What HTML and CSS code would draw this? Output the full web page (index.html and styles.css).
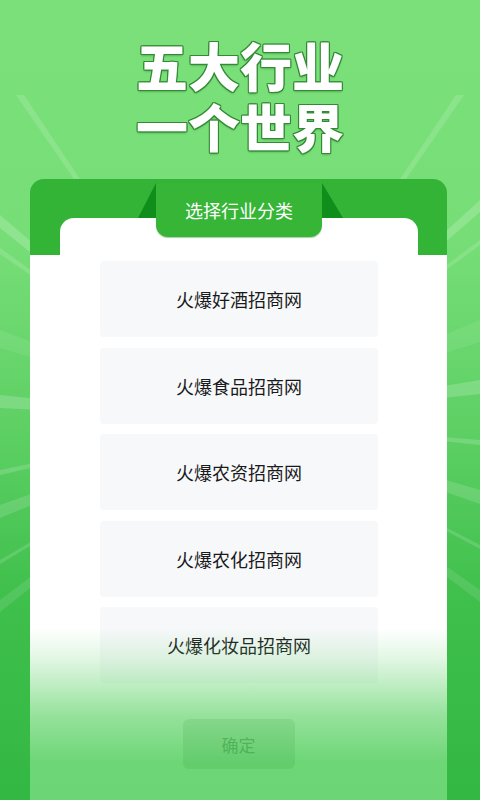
FILE: index.html
```html
<!DOCTYPE html>
<html lang="zh-CN">
<head>
    <meta charset="UTF-8">
    <meta name="viewport" content="width=device-width, initial-scale=1.0">
    <title>选择行业分类</title>
    <link rel="stylesheet" href="styles.css">
</head>
<body>
    <div class="page">
        <svg class="rays" width="480" height="800" viewBox="0 0 480 800">
            <g fill="#ffffff">
                <polygon points="240,420 0,215 0,228" opacity="0.18"/>
                <polygon points="240,420 0,248 0,254" opacity="0.14"/>
                <polygon points="240,420 0,330 0,348" opacity="0.08"/>
                <polygon points="240,420 0,395 0,408" opacity="0.18"/>
                <polygon points="240,420 0,470 0,475" opacity="0.16"/>
                <polygon points="240,420 0,505 0,518" opacity="0.14"/>
                <polygon points="240,420 0,560 0,564" opacity="0.14"/>
                <polygon points="240,420 0,600 0,612" opacity="0.1"/>
                <polygon points="240,420 16,95 24,95" opacity="0.14"/>
                <polygon points="240,420 480,200 480,212" opacity="0.18"/>
                <polygon points="240,420 480,240 480,245" opacity="0.14"/>
                <polygon points="240,420 480,320 480,342" opacity="0.08"/>
                <polygon points="240,420 480,380 480,394" opacity="0.18"/>
                <polygon points="240,420 480,440 480,445" opacity="0.16"/>
                <polygon points="240,420 480,490 480,504" opacity="0.14"/>
                <polygon points="240,420 480,545 480,549" opacity="0.14"/>
                <polygon points="240,420 480,590 480,602" opacity="0.1"/>
                <polygon points="240,420 456,95 464,95" opacity="0.14"/>
            </g>
        </svg>

        <h1 class="title">
            <span class="title-line">五大行业</span>
            <span class="title-line">一个世界</span>
        </h1>

        <div class="card">
            <div class="tab">
                <span class="flap flap-left"></span>
                <span class="flap flap-right"></span>
                选择行业分类
            </div>
            <div class="panel">
                <ul class="list">
                    <li class="item">火爆好酒招商网</li>
                    <li class="item">火爆食品招商网</li>
                    <li class="item">火爆农资招商网</li>
                    <li class="item">火爆农化招商网</li>
                    <li class="item">火爆化妆品招商网</li>
                </ul>
            </div>
            <div class="fade"></div>
            <div class="actions">
                <button class="confirm" disabled>确定</button>
            </div>
        </div>
    </div>
</body>
</html>
```

FILE: styles.css
```css
* {
    box-sizing: border-box;
}
body {
    margin: 0;
    font-family: "Noto Sans CJK SC", "Noto Sans", sans-serif;
}
.page {
    position: relative;
    width: 480px;
    height: 800px;
    overflow: hidden;
    background: linear-gradient(180deg, #7be07a 0%, #77de77 30%, #5ccf63 55%, #3fbf4c 75%, #33b843 100%);
}
.rays {
    position: absolute;
    left: 0;
    top: 0;
}
.title {
    position: relative;
    margin: 0;
    padding-top: 34px;
    height: 179px;
    display: flex;
    flex-direction: column;
    align-items: center;
    font-size: 52px;
    font-weight: 900;
    color: #fff;
    text-shadow: 1px 0 0 #338a36, -1px 0 0 #338a36, 0 1px 0 #338a36, 0 -1px 0 #338a36,
        1px 1px 0 #338a36, -1px -1px 0 #338a36, 1px -1px 0 #338a36, -1px 1px 0 #338a36,
        0 2px 2px rgba(20, 90, 20, 0.35);
}
.title-line {
    display: block;
    height: 61px;
    line-height: 61px;
}
.card {
    position: relative;
    width: 417px;
    height: 621px;
    margin-left: 30px;
    padding-top: 39px;
    border-radius: 14px 14px 0 0;
    background: linear-gradient(180deg, #33b436 0, #33b436 76px, #fff 76px);
}
.tab {
    position: absolute;
    top: 4px;
    left: 126px;
    width: 166px;
    height: 54px;
    padding-top: 14px;
    background: #36b537;
    border-radius: 0 0 12px 12px;
    box-shadow: 0 1px 1px rgba(20, 110, 20, 0.35);
    color: #fff;
    font-size: 18px;
    line-height: 26px;
    text-align: center;
    z-index: 2;
}
.flap {
    position: absolute;
    top: 0;
    width: 0;
    height: 0;
    border-bottom: 35px solid #0f8e1b;
}
.flap-left {
    left: -18px;
    border-left: 18px solid transparent;
}
.flap-right {
    right: -21px;
    border-right: 21px solid transparent;
}
.panel {
    margin: 0 29px 0 30px;
    padding-top: 43px;
    background: #fff;
    border-radius: 14px 14px 0 0;
}
.list {
    list-style: none;
    margin: 0 auto;
    padding: 0;
    width: 278px;
    display: flex;
    flex-direction: column;
    gap: 10.5px;
}
.item {
    height: 76px;
    display: flex;
    align-items: center;
    justify-content: center;
    background: #f7f8fa;
    border-radius: 4px;
    font-size: 18px;
    color: #1a1a1a;
}
.fade {
    position: absolute;
    left: 0;
    right: 0;
    bottom: 0;
    height: 172px;
    background: linear-gradient(180deg, rgba(108, 214, 116, 0) 0%, rgba(108, 214, 116, 0.2) 18%, rgba(108, 214, 116, 0.7) 50%, #6dd676 78%, #6cd575 100%);
}
.actions {
    position: relative;
    display: flex;
    justify-content: center;
    padding-top: 36px;
}
.confirm {
    width: 112px;
    height: 50px;
    border: none;
    border-radius: 6px;
    background: rgba(40, 150, 50, 0.13);
    color: rgba(40, 140, 50, 0.45);
    font-family: "Noto Sans CJK SC", sans-serif;
    font-size: 17px;
}
```
